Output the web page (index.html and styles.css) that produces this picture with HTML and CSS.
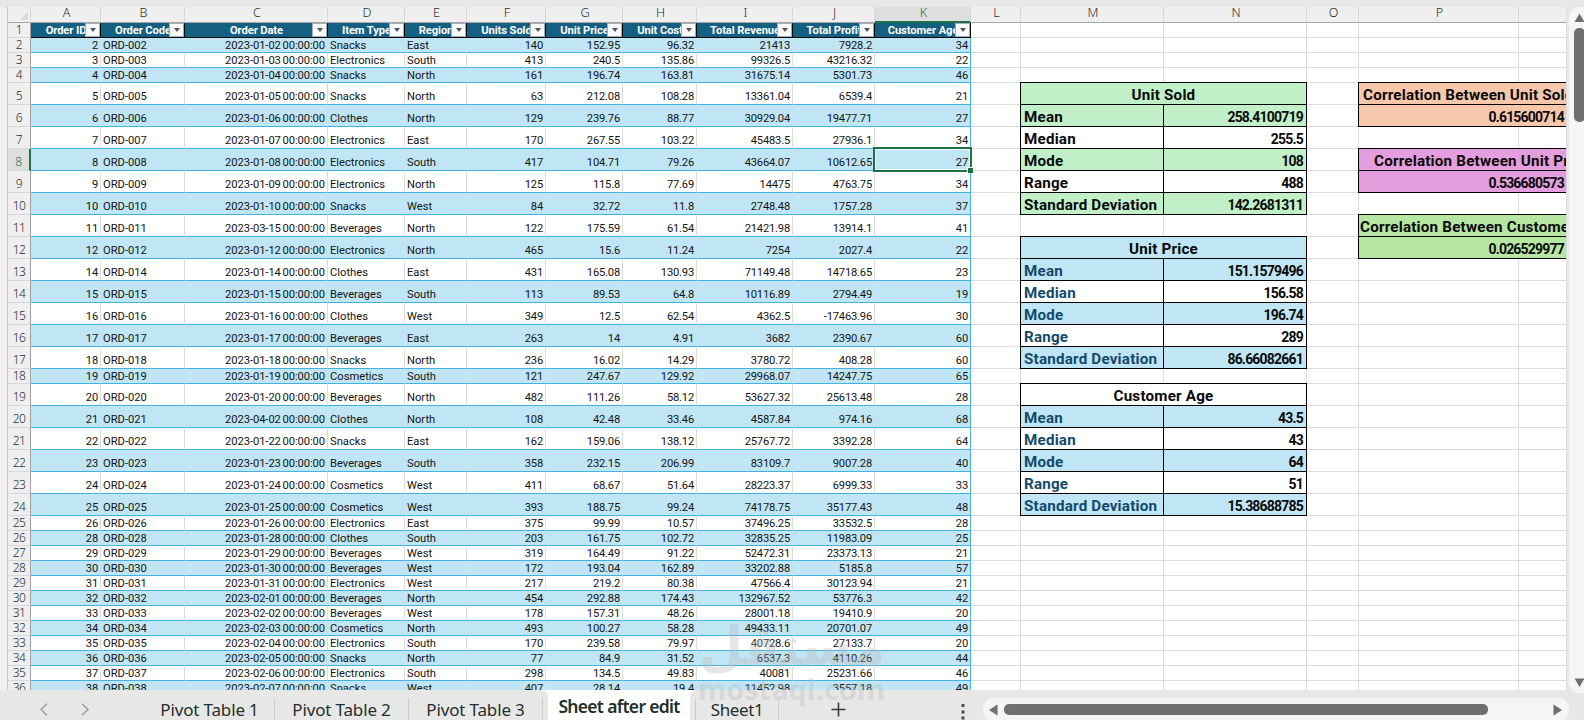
FILE: index.html
```
<!DOCTYPE html>
<html lang="en">
<head>
    <meta charset="UTF-8">
    <meta name="viewport" content="width=device-width, initial-scale=1.0">
    <title>Sheet after edit</title>
    <link rel="stylesheet" href="styles.css">
</head>
<body>
    <div class="app">
        <div class="workspace">
            <div class="sheet">
                <table class="grid">
                    <colgroup id="cols"></colgroup>
                    <thead id="letters"></thead>
                    <tbody id="rows"></tbody>
                </table>
            </div>
            <div class="vscroll">
                <svg width="11" height="10" viewBox="0 0 11 10"><path d="M5.5 0.5 L10.5 9 H0.5 Z" fill="#6f6f6f"/></svg>
                <div class="vthumb"></div>
                <svg class="down" width="11" height="10" viewBox="0 0 11 10"><path d="M5.5 9 L10.5 0.5 H0.5 Z" fill="#6f6f6f"/></svg>
            </div>
        </div>

        <div class="tabbar">
            <div class="tabs-left">
                <svg class="nav" width="8" height="13" viewBox="0 0 8 13"><path d="M7 0.8 L1 6.5 L7 12.2" fill="none" stroke="#9a9e9a" stroke-width="1.5"/></svg>
                <svg class="nav nav-next" width="8" height="13" viewBox="0 0 8 13"><path d="M1 0.8 L7 6.5 L1 12.2" fill="none" stroke="#9a9e9a" stroke-width="1.5"/></svg>
                <div class="tab first">Pivot Table 1</div>
                <div class="tab">Pivot Table 2</div>
                <div class="tab">Pivot Table 3</div>
            </div>
            <div class="tab-active">Sheet after edit</div>
            <div class="tabs-right">
                <div class="tab last">Sheet1</div>
                <svg class="plus" width="15" height="15" viewBox="0 0 15 15"><path d="M7.5 0.5 V14.5 M0.5 7.5 H14.5" stroke="#3a3a3a" stroke-width="1.6"/></svg>
                <svg class="dots" width="4" height="17" viewBox="0 0 4 17"><path d="M0.5 1h3v3h-3z M0.5 7.5h3v3h-3z M0.5 13.5h3v3h-3z" fill="#4a4a4a"/></svg>
                <div class="hscroll">
                    <svg width="9" height="12" viewBox="0 0 9 12"><path d="M0 6 L8.5 0.5 V11.5 Z" fill="#6f6f6f"/></svg>
                    <div class="hthumb"></div>
                    <svg class="right" width="9" height="12" viewBox="0 0 9 12"><path d="M9 6 L0.5 0.5 V11.5 Z" fill="#6f6f6f"/></svg>
                </div>
            </div>
        </div>

        <svg class="watermark" width="190" height="100" viewBox="0 0 190 100">
            <text class="wm-ar" x="95" y="45" text-anchor="middle" textLength="186" lengthAdjust="spacingAndGlyphs">مستقل</text>
            <text class="wm-en" x="1" y="80" textLength="187" lengthAdjust="spacingAndGlyphs">mostaql.com</text>
        </svg>
    </div>

    <script>
        const widths = [23, 70, 84, 143, 77, 62, 79, 77, 74, 96, 82, 96, 50, 143, 143, 52, 160, 48];
        const letters = 'ABCDEFGHIJKLMNOP'.split('');
        const headers = ['Order ID', 'Order Code', 'Order Date', 'Item Type', 'Region', 'Units Sold', 'Unit Price', 'Unit Cost', 'Total Revenue', 'Total Profit', 'Customer Age'];

        // id, date, item, region, units, price, cost, revenue, profit, age
        const orders = [
            [2, '2023-01-02', 'Snacks', 'East', 140, 152.95, 96.32, 21413, 7928.2, 34],
            [3, '2023-01-03', 'Electronics', 'South', 413, 240.5, 135.86, 99326.5, 43216.32, 22],
            [4, '2023-01-04', 'Snacks', 'North', 161, 196.74, 163.81, 31675.14, 5301.73, 46],
            [5, '2023-01-05', 'Snacks', 'North', 63, 212.08, 108.28, 13361.04, 6539.4, 21],
            [6, '2023-01-06', 'Clothes', 'North', 129, 239.76, 88.77, 30929.04, 19477.71, 27],
            [7, '2023-01-07', 'Electronics', 'East', 170, 267.55, 103.22, 45483.5, 27936.1, 34],
            [8, '2023-01-08', 'Electronics', 'South', 417, 104.71, 79.26, 43664.07, 10612.65, 27],
            [9, '2023-01-09', 'Electronics', 'North', 125, 115.8, 77.69, 14475, 4763.75, 34],
            [10, '2023-01-10', 'Snacks', 'West', 84, 32.72, 11.8, 2748.48, 1757.28, 37],
            [11, '2023-03-15', 'Beverages', 'North', 122, 175.59, 61.54, 21421.98, 13914.1, 41],
            [12, '2023-01-12', 'Electronics', 'North', 465, 15.6, 11.24, 7254, 2027.4, 22],
            [14, '2023-01-14', 'Clothes', 'East', 431, 165.08, 130.93, 71149.48, 14718.65, 23],
            [15, '2023-01-15', 'Beverages', 'South', 113, 89.53, 64.8, 10116.89, 2794.49, 19],
            [16, '2023-01-16', 'Clothes', 'West', 349, 12.5, 62.54, 4362.5, -17463.96, 30],
            [17, '2023-01-17', 'Beverages', 'East', 263, 14, 4.91, 3682, 2390.67, 60],
            [18, '2023-01-18', 'Snacks', 'North', 236, 16.02, 14.29, 3780.72, 408.28, 60],
            [19, '2023-01-19', 'Cosmetics', 'South', 121, 247.67, 129.92, 29968.07, 14247.75, 65],
            [20, '2023-01-20', 'Beverages', 'North', 482, 111.26, 58.12, 53627.32, 25613.48, 28],
            [21, '2023-04-02', 'Clothes', 'North', 108, 42.48, 33.46, 4587.84, 974.16, 68],
            [22, '2023-01-22', 'Snacks', 'East', 162, 159.06, 138.12, 25767.72, 3392.28, 64],
            [23, '2023-01-23', 'Beverages', 'South', 358, 232.15, 206.99, 83109.7, 9007.28, 40],
            [24, '2023-01-24', 'Cosmetics', 'West', 411, 68.67, 51.64, 28223.37, 6999.33, 33],
            [25, '2023-01-25', 'Cosmetics', 'West', 393, 188.75, 99.24, 74178.75, 35177.43, 48],
            [26, '2023-01-26', 'Electronics', 'East', 375, 99.99, 10.57, 37496.25, 33532.5, 28],
            [28, '2023-01-28', 'Clothes', 'South', 203, 161.75, 102.72, 32835.25, 11983.09, 25],
            [29, '2023-01-29', 'Beverages', 'West', 319, 164.49, 91.22, 52472.31, 23373.13, 21],
            [30, '2023-01-30', 'Beverages', 'West', 172, 193.04, 162.89, 33202.88, 5185.8, 57],
            [31, '2023-01-31', 'Electronics', 'West', 217, 219.2, 80.38, 47566.4, 30123.94, 21],
            [32, '2023-02-01', 'Beverages', 'North', 454, 292.88, 174.43, 132967.52, 53776.3, 42],
            [33, '2023-02-02', 'Beverages', 'West', 178, 157.31, 48.26, 28001.18, 19410.9, 20],
            [34, '2023-02-03', 'Cosmetics', 'North', 493, 100.27, 58.28, 49433.11, 20701.07, 49],
            [35, '2023-02-04', 'Electronics', 'South', 170, 239.58, 79.97, 40728.6, 27133.7, 20],
            [36, '2023-02-05', 'Snacks', 'North', 77, 84.9, 31.52, 6537.3, 4110.26, 44],
            [37, '2023-02-06', 'Electronics', 'South', 298, 134.5, 49.83, 40081, 25231.66, 46],
            [38, '2023-02-07', 'Snacks', 'West', 407, 28.14, 19.4, 11452.98, 3557.18, 49]
        ];

        // summary blocks in columns M:N, keyed by their first row
        const stats = [
            { row: 5, title: 'Unit Sold', theme: 'green', values: ['258.4100719', '255.5', '108', '488', '142.2681311'] },
            { row: 12, title: 'Unit Price', theme: 'blue', values: ['151.1579496', '156.58', '196.74', '289', '86.66082661'] },
            { row: 19, title: 'Customer Age', theme: 'blue plain', values: ['43.5', '43', '64', '51', '15.38688785'] }
        ];
        const labels = ['Mean', 'Median', 'Mode', 'Range', 'Standard Deviation'];

        const correlations = {
            5: ['orange title-a', 'Correlation Between Unit Sold'],
            6: ['orange value', '0.615600714'],
            8: ['pink title-b', 'Correlation Between Unit Price'],
            9: ['pink value', '0.536680573'],
            11: ['lime title-c', 'Correlation Between Customer'],
            12: ['lime value', '0.026529977']
        };

        function statCells(n) {
            for (const s of stats) {
                const i = n - s.row;
                if (i === 0) {
                    return `<td colspan="2" class="stat head ${s.theme}">${s.title}</td>`;
                }
                if (i > 0 && i <= 5) {
                    const fill = i % 2 ? 'fill' : '';
                    return `<td class="stat label ${s.theme} ${fill}">${labels[i - 1]}</td><td class="stat value ${s.theme} ${fill}">${s.values[i - 1]}</td>`;
                }
            }
            return '<td></td><td></td>';
        }

        function corrCells(n) {
            const c = correlations[n];
            return c ? `<td colspan="2" class="stat corr ${c[0]}">${c[1]}</td>` : '<td></td><td></td>';
        }

        function orderCells(o, n) {
            const cells = [o[0], 'ORD-' + String(o[0]).padStart(3, '0'), o[1] + ' 00:00:00', ...o.slice(2)];
            return cells.map((v, i) => {
                const text = i === 1 || i === 3 || i === 4;
                const selected = n === 8 && i === 10;
                return `<td class="${text ? 'text' : 'num'}${i === 2 ? ' date' : ''}${selected ? ' selected' : ''}">${v}${selected ? '<i class="handle"></i>' : ''}</td>`;
            }).join('');
        }

        function isShort(n) {
            return n < 5 || n === 18 || n > 24;
        }

        document.getElementById('cols').innerHTML = widths.map(w => `<col style="width:${w}px">`).join('');

        document.getElementById('letters').innerHTML = '<tr><th class="corner"></th>' +
            letters.map(l => `<th class="${l === 'K' ? 'current' : ''}">${l}</th>`).join('') + '<th></th></tr>';

        let html = '<tr class="short titles"><th>1</th>' +
            headers.map(h => `<td class="title">${h}<i class="filter"></i></td>`).join('') + '<td></td>'.repeat(6) + '</tr>';

        orders.forEach((o, i) => {
            const n = i + 2;
            html += `<tr class="order ${isShort(n) ? 'short' : 'tall'} ${n % 2 ? '' : 'band'}"><th class="${n === 8 ? 'current' : ''}">${n}</th>` +
                orderCells(o, n) + '<td></td>' + statCells(n) + '<td></td>' + corrCells(n) + '</tr>';
        });
        document.getElementById('rows').innerHTML = html;
    </script>
</body>
</html>
```
FILE: styles.css
```
* {
    margin: 0;
    padding: 0;
    box-sizing: border-box;
}

body {
    background-color: #e7e7e5;
    font-family: Roboto, sans-serif;
    overflow: hidden;
}

.app {
    position: relative;
    width: 1584px;
    height: 720px;
    padding-top: 7px;
    overflow: hidden;
}

.workspace {
    display: flex;
    height: 683px;
}

.sheet {
    flex-shrink: 0;
    width: 1567px;
    height: 683px;
    padding-left: 7px;
    background-color: #efefef;
    border-right: 1px solid #dcdcdc;
    overflow: hidden;
}

.grid {
    width: 1560px;
    table-layout: fixed;
    border-collapse: separate;
    border-spacing: 0;
    border-left: 1px solid #c8c8c8;
    background-color: white;
}

/* column letters and row numbers */
.grid th {
    font-family: "Noto Sans", sans-serif;
    font-weight: 300;
    font-size: 12px;
    color: #2c2c2c;
    background-color: #efefef;
}

.grid thead th {
    height: 16px;
    line-height: 12px;
    font-size: 12.5px;
    padding: 0 0 3px 2px;
    border-bottom: 1px solid #a6a6a6;
    border-right: 1px solid #d8d8d8;
}

.grid thead th.current {
    background-color: #dedede;
    color: #1e7145;
    border-bottom: 2px solid #1e7145;
    padding-bottom: 2px;
}

thead th.corner {
    background-image: linear-gradient(135deg, transparent 50%, #dcdcdc 50%);
    background-size: 9px 9px;
    background-position: 11px 4px;
    background-repeat: no-repeat;
}

tbody th {
    height: 22px;
    padding-bottom: 1px;
    line-height: 13px;
    letter-spacing: -0.6px;
    vertical-align: bottom;
    border-right: 1px solid #a0a0a0;
    border-bottom: 1px solid #d8d8d8;
}

.grid tbody th.current {
    background-color: #dedede;
    color: #1e7145;
    border-right: 2px solid #1e7145;
}

td {
    height: 22px;
    padding: 0 2px;
    font-size: 11.2px;
    line-height: 13px;
    letter-spacing: -0.2px;
    color: #141414;
    vertical-align: bottom;
    white-space: nowrap;
    overflow: hidden;
    border-right: 1px solid #dcdcdc;
    border-bottom: 1px solid #dcdcdc;
}

.short th,
.short td {
    height: 15px;
}

.tall th {
    padding-bottom: 2px;
}

.tall .num,
.tall .text {
    padding-bottom: 1px;
}

/* filter row */
.titles .title {
    position: relative;
    background-color: #156082;
    color: white;
    font-weight: bold;
    text-align: center;
    line-height: 12px;
    letter-spacing: -0.1px;
    padding-left: 3px;
    border-right-color: #0b0b0b;
    border-bottom-color: #0b0b0b;
}

.filter {
    position: absolute;
    top: 0;
    right: 0;
    width: 15px;
    height: 14px;
    background-color: #f8f9fb;
    border: 1px solid #a9adb3;
}

.filter::after {
    content: "";
    position: absolute;
    left: 4px;
    top: 4px;
    border-left: 3px solid transparent;
    border-right: 3px solid transparent;
    border-top: 4px solid #555;
}

/* order rows */
.num {
    text-align: right;
}

.text {
    letter-spacing: 0;
}

.date {
    letter-spacing: -0.08px;
    word-spacing: -1px;
}

.order .num,
.order .text {
    border-bottom-color: #44b3e1;
}

.band .num,
.band .text {
    background-color: #c0e6f5;
    border-right-color: #c0e6f5;
}

.order td:nth-child(12) {
    border-right-color: #44b3e1;
}

.order .selected {
    position: relative;
    overflow: visible;
}

.selected::before {
    content: "";
    position: absolute;
    top: -2px;
    right: -2px;
    bottom: -2px;
    left: -2px;
    border: 2px solid #1e7145;
    box-shadow: inset 0 0 0 1px white;
}

.handle {
    position: absolute;
    right: -3px;
    bottom: -3px;
    width: 6px;
    height: 6px;
    background-color: #1e7145;
    border-top: 1px solid white;
    border-left: 1px solid white;
}

/* summary blocks */
.stat {
    font-weight: bold;
    font-size: 15.2px;
    line-height: 17px;
    letter-spacing: 0.2px;
    color: #0a0a0a;
    border-color: #000;
    box-shadow: -1px 0 0 #000, 0 -1px 0 #000, -1px -1px 0 #000;
}

.label {
    padding-left: 3px;
}

.head {
    text-align: center;
}

.stat.value {
    font-size: 14px;
    line-height: 17px;
    letter-spacing: -0.8px;
    padding-right: 3px;
    text-align: right;
}

.green.head,
.green.fill {
    background-color: #c1f0c8;
}

.blue.head,
.blue.fill {
    background-color: #c0e6f5;
}

.blue.label {
    color: #134a6b;
}

.plain.head {
    background-color: white;
}

.corr {
    border-right: none;
}

.orange {
    background-color: #f7c7ac;
}

.pink {
    background-color: #e49edd;
}

.lime {
    background-color: #b5e6a2;
}

.title-a {
    padding-left: 4px;
}

.title-b {
    padding-left: 15px;
}

.title-c {
    padding-left: 1px;
}

/* scrollbars */
.vscroll {
    position: relative;
    z-index: 1;
    display: flex;
    flex-direction: column;
    width: 24px;
    height: 686px;
    margin-left: 2px;
    padding: 6px 0 5px 5px;
    flex-shrink: 0;
    background-color: #f5f5f5;
    border-radius: 11px;
}

.vthumb {
    width: 11px;
    height: 94px;
    margin-top: 5px;
    border-radius: 5px;
    background-color: #6f6f6f;
}

.down {
    margin-top: auto;
}

.hscroll {
    display: flex;
    align-items: center;
    width: 586px;
    height: 23px;
    margin: 8px 0 0 18px;
    padding: 0 7px 0 6px;
    background-color: #f5f5f5;
    border-radius: 11px;
}

.hthumb {
    width: 484px;
    height: 11px;
    margin-left: 6px;
    border-radius: 5px;
    background-color: #6f6f6f;
}

.right {
    margin-left: auto;
}

/* sheet tabs */
.tabbar {
    display: flex;
    height: 30px;
    background-color: white;
    font-family: "Noto Sans", sans-serif;
    font-size: 17px;
    color: #1f2f2c;
}

.tabs-left,
.tabs-right {
    display: flex;
    align-items: flex-start;
    background-color: #e7e7e6;
}

.tabs-left {
    width: 548px;
    padding-left: 40px;
    border-top-right-radius: 6px;
}

.tabs-right {
    flex: 1;
    padding-left: 5px;
    border-top-left-radius: 6px;
}

.nav {
    margin-top: 13px;
}

.nav-next {
    margin-left: 33px;
}

.tab {
    width: 134px;
    height: 22px;
    margin-top: 8px;
    line-height: 24px;
    text-align: center;
    white-space: nowrap;
    letter-spacing: -0.15px;
    border-right: 1px solid #cccccc;
}

.tab.first {
    width: 130px;
    margin-left: 56px;
}

.tab.last {
    width: 84px;
    letter-spacing: -0.4px;
    border-left: 1px solid #cccccc;
}

.tab-active {
    width: 142px;
    text-align: center;
    line-height: 32px;
    font-size: 17.5px;
    font-weight: 600;
    letter-spacing: -0.7px;
    white-space: nowrap;
}

.plus {
    margin: 12px 0 0 52px;
}

.dots {
    margin: 13px 0 0 115px;
}

.watermark {
    position: absolute;
    left: 697px;
    top: 620px;
    fill: rgba(185, 185, 185, 0.36);
}

.wm-ar {
    font-family: "DejaVu Sans", sans-serif;
    font-weight: bold;
    font-size: 54px;
}

.wm-en {
    font-family: "Open Sans", sans-serif;
    font-weight: bold;
    font-size: 29px;
}
```
